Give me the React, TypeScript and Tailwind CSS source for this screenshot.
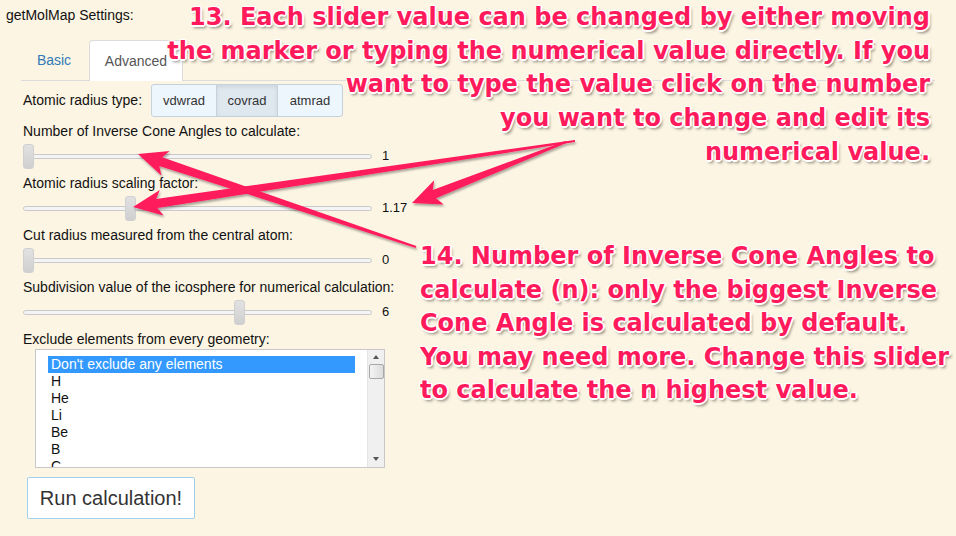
import React from "react";

type Pt = [number, number];

function arrowPoints(tail: Pt, tip: Pt, w0 = 2, w1 = 9, L = 24, H = 13) {
  const [x0, y0] = tail; const [x1, y1] = tip;
  const len = Math.hypot(x1 - x0, y1 - y0);
  const ux = (x1 - x0) / len, uy = (y1 - y0) / len;
  const nx = -uy, ny = ux;
  const bx = x1 - ux * L, by = y1 - uy * L;
  const pts: Pt[] = [
    [x0 + nx * w0 / 2, y0 + ny * w0 / 2],
    [bx + nx * w1 / 2, by + ny * w1 / 2],
    [bx - ux * 5 + nx * H, by - uy * 5 + ny * H],
    [x1, y1],
    [bx - ux * 5 - nx * H, by - uy * 5 - ny * H],
    [bx - nx * w1 / 2, by - ny * w1 / 2],
    [x0 - nx * w0 / 2, y0 - ny * w0 / 2],
  ];
  return pts.map(p => p[0].toFixed(1) + "," + p[1].toFixed(1)).join(" ");
}

function Slider({ label, value, pos }: { label: string; value: string; pos: number }) {
  return (
    <div className="mb-[4px]">
      <div className="h-[16px] leading-[16px]">{label}</div>
      <div className="mt-[2px] flex h-[30px] items-center">
        <div className="relative h-[5px] w-[349px] rounded-full border border-[#c9c9c9] bg-[#f4f4f4]">
          <div className="absolute top-[-11px] h-[25px] w-[11px] rounded-[3px] border border-[#d0d0d0] bg-gradient-to-b from-[#e2e2e2] to-[#cfcfcf]" style={{ left: pos }} />
        </div>
        <span className="ml-[10px] text-[13px]">{value}</span>
      </div>
    </div>
  );
}

const elements = ["H", "He", "Li", "Be", "B", "C"];

export default function App() {
  const shadow = "[text-shadow:1px_1px_0_#fff,-1px_-1px_0_#fff,1px_-1px_0_#fff,-1px_1px_0_#fff,0_2px_0_#fff,2px_0_0_#fff,2px_3px_3px_rgba(0,0,0,0.45)]";
  return (
    <div className="relative h-[536px] w-[956px] overflow-hidden bg-[#fcf5e3] font-['Liberation_Sans',Arial,sans-serif] text-[14px] text-[#111]">
      <div className="pl-[6px] pt-[7px] leading-[16px]">getMolMap Settings:</div>

      <div className="ml-[21px] mt-[17px] flex w-[914px] border-b border-[#dcdcdc] text-[14px]">
        <div className="flex h-[40px] w-[66px] items-center justify-center text-[#337ab7]">Basic</div>
        <div className="-mb-px ml-[2px] flex h-[41px] w-[94px] items-center justify-center rounded-t-[4px] border border-b-0 border-[#dcdcdc] bg-white text-[#555]">Advanced</div>
      </div>

      <div className="pl-[23px]">
        <div className="mt-[3px] flex h-[33px] items-center">
          <span className="w-[128px]">Atomic radius type:</span>
          <div className="flex h-[33px] overflow-hidden rounded-[3px] border border-[#c5d1dc] bg-[#eef6fd] text-[13px] text-[#333]">
            <div className="flex w-[64px] items-center justify-center">vdwrad</div>
            <div className="flex w-[62px] items-center justify-center border-x border-[#c5d1dc] bg-[#dfe7ef] shadow-[inset_0_2px_4px_rgba(0,0,0,0.08)]">covrad</div>
            <div className="flex w-[64px] items-center justify-center">atmrad</div>
          </div>
        </div>

        <div className="mt-[6px]">
          <Slider label="Number of Inverse Cone Angles to calculate:" value="1" pos={-1} />
          <Slider label="Atomic radius scaling factor:" value="1.17" pos={101} />
          <Slider label="Cut radius measured from the central atom:" value="0" pos={-1} />
          <Slider label="Subdivision value of the icosphere for numerical calculation:" value="6" pos={210} />
        </div>

        <div className="h-[16px] leading-[16px]">Exclude elements from every geometry:</div>
        <div className="ml-[12px] mt-[2px] flex h-[119px] w-[350px] overflow-hidden border border-[#c8c8c8] bg-white">
          <div className="flex-1 pl-[12px] pt-[6px] leading-[17px]">
            <div className="w-[307px] bg-[#3399ff] pl-[3px] text-white">Don't exclude any elements</div>
            {elements.map(e => <div key={e} className="pl-[3px]">{e}</div>)}
          </div>
          <div className="flex w-[17px] flex-col items-center border-l border-[#e4e4e4] bg-[#f0f0f0]">
            <div className="mt-[5px] h-0 w-0 border-x-[3px] border-b-[4px] border-x-transparent border-b-[#555]" />
            <div className="mt-[5px] h-[15px] w-[15px] rounded-[2px] border border-[#a8a8a8] bg-gradient-to-r from-[#f4f4f4] to-[#dcdcdc]" />
            <div className="flex-1" />
            <div className="mb-[6px] h-0 w-0 border-x-[3px] border-t-[4px] border-x-transparent border-t-[#555]" />
          </div>
        </div>

        <button className="ml-[4px] mt-[9px] h-[42px] w-[168px] rounded-[2px] border border-[#9fd0ee] bg-white text-[20px] text-[#333]">Run calculation!</button>
      </div>

      <svg className="pointer-events-none absolute left-0 top-0" width="956" height="536">
        <defs>
          <filter id="sh" x="-10%" y="-10%" width="120%" height="130%">
            <feDropShadow dx="1" dy="2" stdDeviation="1.2" floodColor="#000" floodOpacity="0.35" />
          </filter>
        </defs>
        <g fill="#ff1a5c" filter="url(#sh)">
          <polygon points={arrowPoints([575, 141], [133, 207])} />
          <polygon points={arrowPoints([566, 142], [412, 203])} />
          <polygon points={arrowPoints([416, 247], [138, 154])} />
        </g>
      </svg>

      <div className={`absolute right-[26px] top-[1px] text-right font-['DejaVu_Sans',sans-serif] text-[24px] font-bold leading-[33.7px] text-[#ff1a5c] ${shadow}`}>
        13. Each slider value can be changed by either moving<br />
        the marker or typing the numerical value directly. If you<br />
        want to type the value click on the number<br />
        you want to change and edit its<br />
        numerical value.
      </div>

      <div className={`absolute left-[420px] top-[240px] font-['DejaVu_Sans',sans-serif] text-[24px] font-bold leading-[33.5px] text-[#ff1a5c] ${shadow}`}>
        14. Number of Inverse Cone Angles to<br />
        calculate (n): only the biggest Inverse<br />
        Cone Angle is calculated by default.<br />
        You may need more. Change this slider<br />
        to calculate the n highest value.
      </div>
    </div>
  );
}
